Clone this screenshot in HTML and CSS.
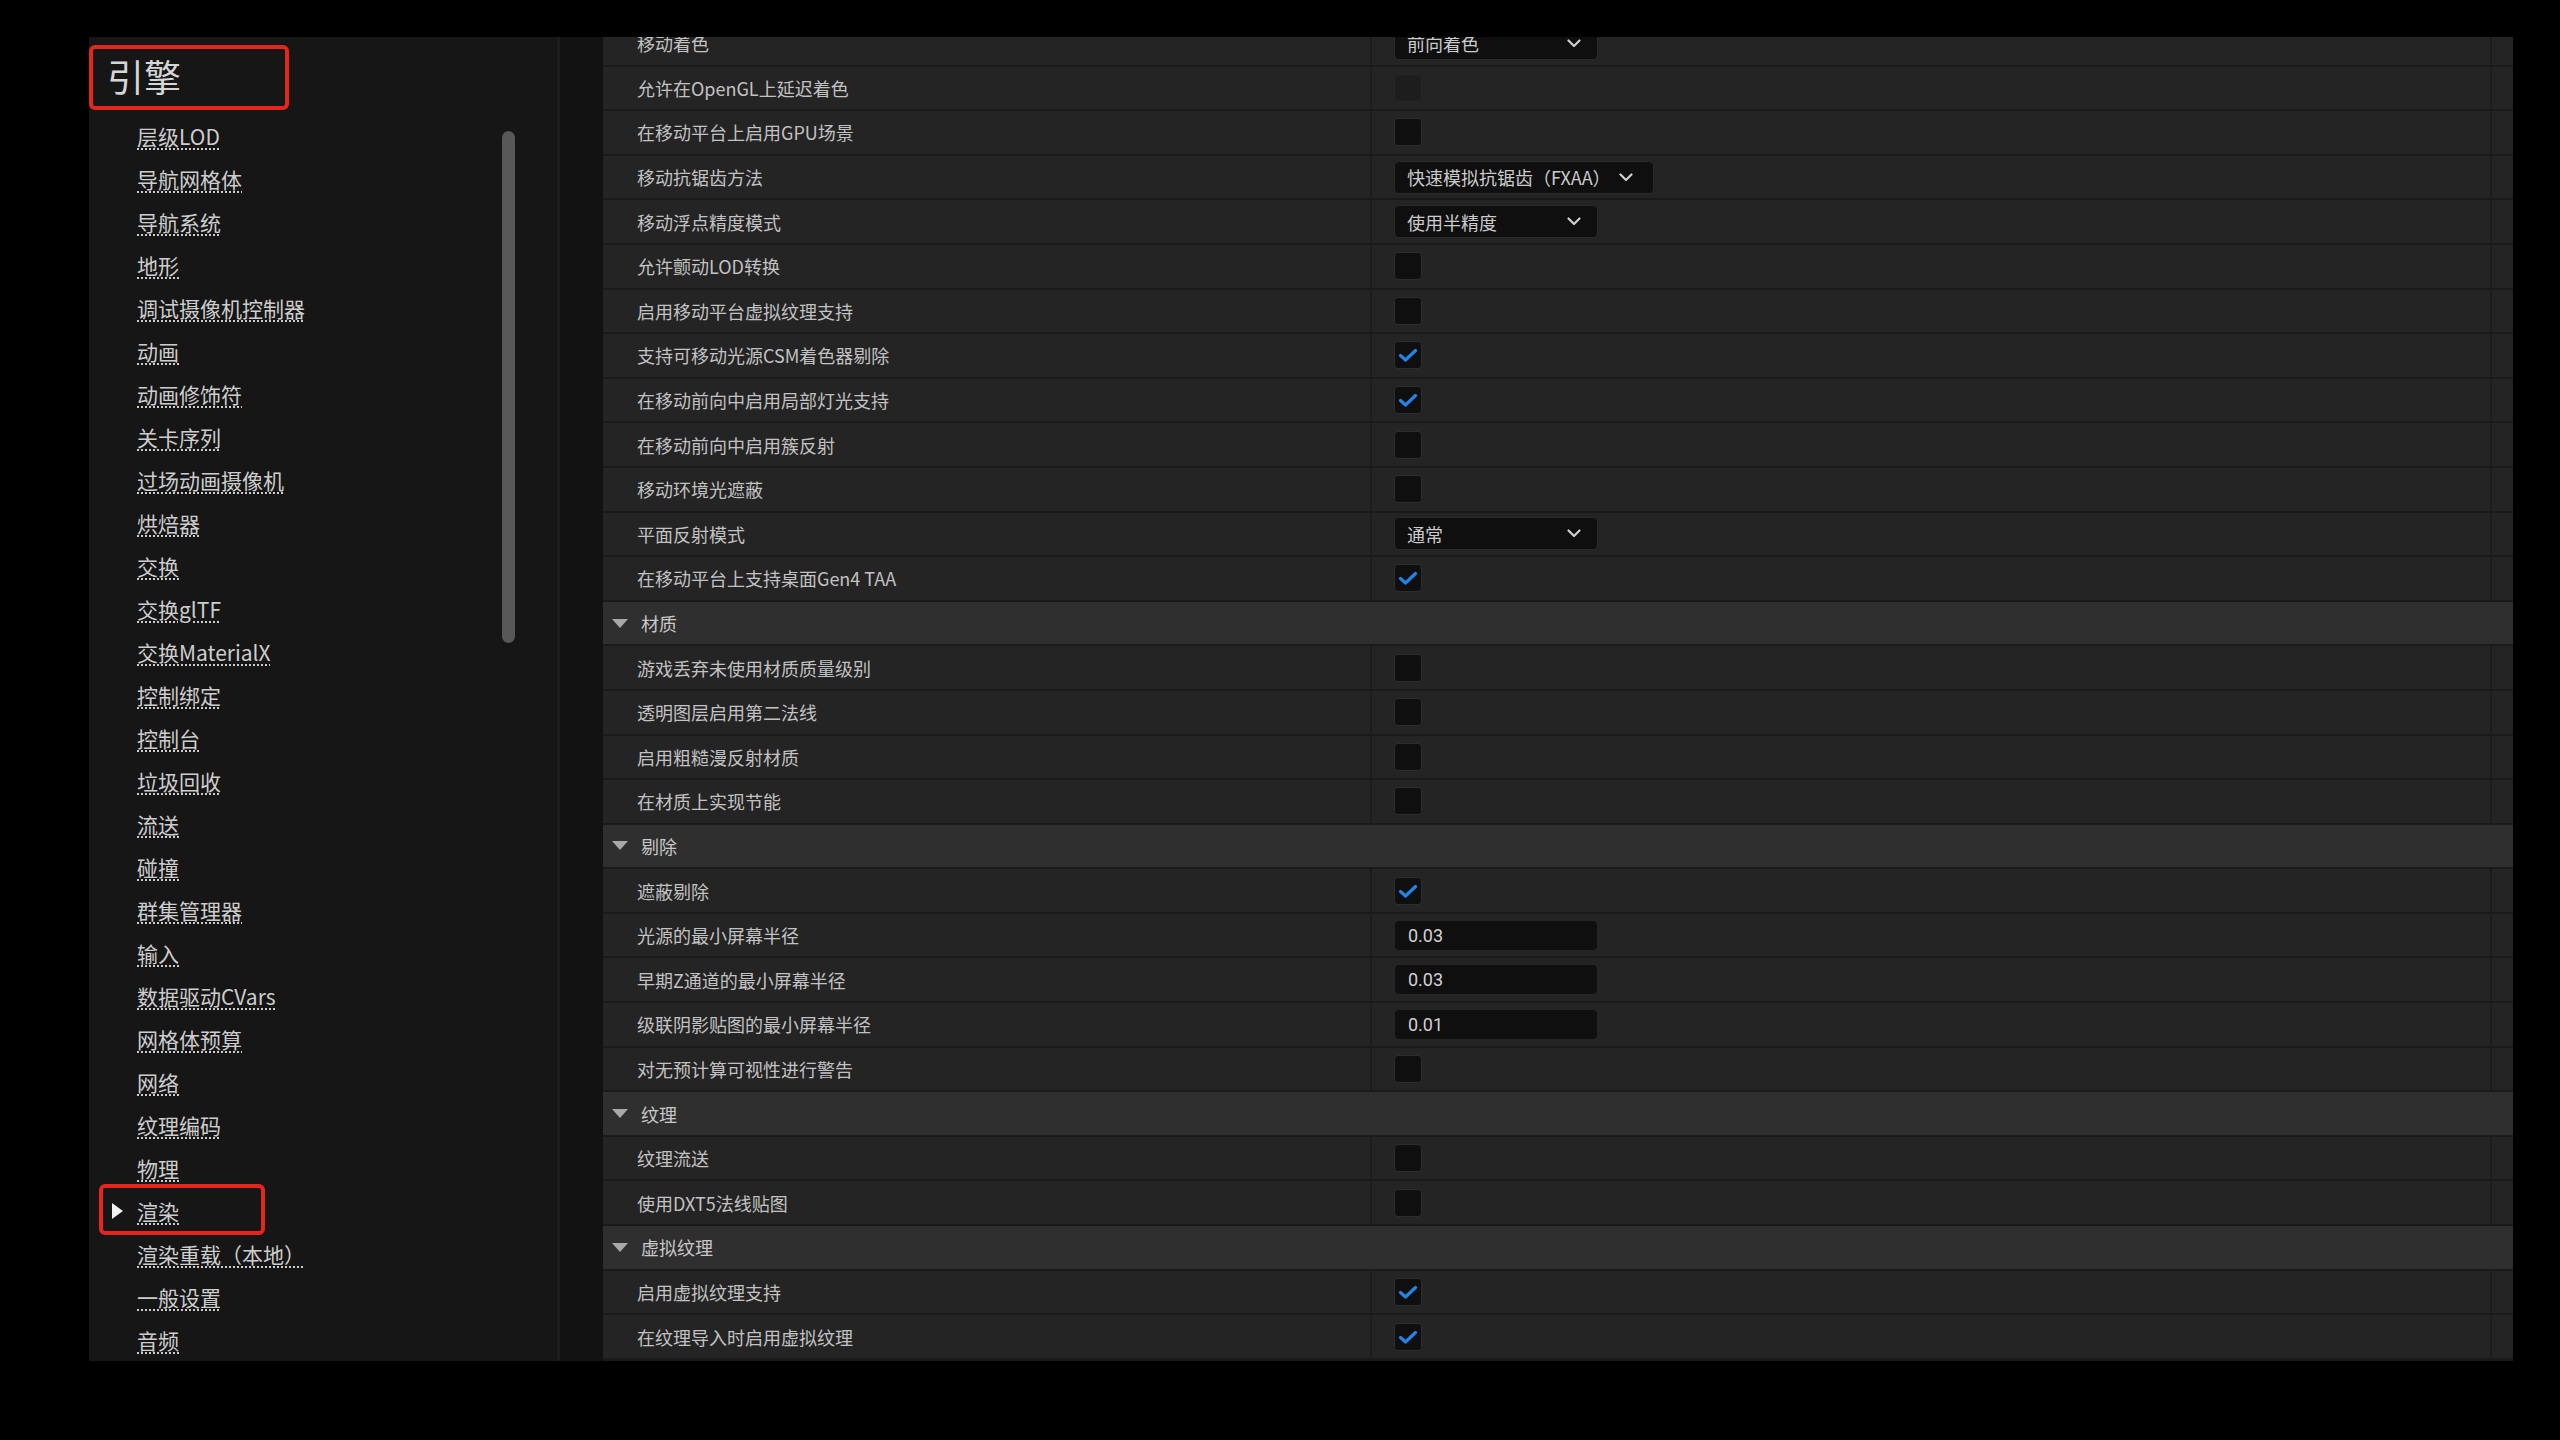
FILE: index.html
```html
<!DOCTYPE html>
<html lang="zh-CN">
<head>
    <meta charset="UTF-8">
    <title>项目设置 - 渲染</title>
    <link rel="stylesheet" href="styles.css">
</head>
<body>
    <div class="window">
        <aside class="sidebar">
            <div class="section-title">引擎</div>
            <ul class="nav">
                <li><span class="mark"></span><a>层级LOD</a></li>
                <li><span class="mark"></span><a>导航网格体</a></li>
                <li><span class="mark"></span><a>导航系统</a></li>
                <li><span class="mark"></span><a>地形</a></li>
                <li><span class="mark"></span><a>调试摄像机控制器</a></li>
                <li><span class="mark"></span><a>动画</a></li>
                <li><span class="mark"></span><a>动画修饰符</a></li>
                <li><span class="mark"></span><a>关卡序列</a></li>
                <li><span class="mark"></span><a>过场动画摄像机</a></li>
                <li><span class="mark"></span><a>烘焙器</a></li>
                <li><span class="mark"></span><a>交换</a></li>
                <li><span class="mark"></span><a>交换glTF</a></li>
                <li><span class="mark"></span><a>交换MaterialX</a></li>
                <li><span class="mark"></span><a>控制绑定</a></li>
                <li><span class="mark"></span><a>控制台</a></li>
                <li><span class="mark"></span><a>垃圾回收</a></li>
                <li><span class="mark"></span><a>流送</a></li>
                <li><span class="mark"></span><a>碰撞</a></li>
                <li><span class="mark"></span><a>群集管理器</a></li>
                <li><span class="mark"></span><a>输入</a></li>
                <li><span class="mark"></span><a>数据驱动CVars</a></li>
                <li><span class="mark"></span><a>网格体预算</a></li>
                <li><span class="mark"></span><a>网络</a></li>
                <li><span class="mark"></span><a>纹理编码</a></li>
                <li><span class="mark"></span><a>物理</a></li>
                <li class="active"><span class="mark"></span><a>渲染</a></li>
                <li><span class="mark"></span><a>渲染重载（本地）</a></li>
                <li><span class="mark"></span><a>一般设置</a></li>
                <li><span class="mark"></span><a>音频</a></li>
            </ul>
            <div class="scrollbar"></div>
        </aside>
        <div class="splitter"></div>
        <main class="details">
            <div class="rows">
                <div class="row"><div class="name">移动着色</div><div class="value"><div class="combo"><span>前向着色</span><svg viewBox="0 0 14 9"><path d="M1.5 1.5 L7 7 L12.5 1.5"/></svg></div></div><div class="tail"></div></div>
                <div class="row"><div class="name">允许在OpenGL上延迟着色</div><div class="value"><span class="check disabled"></span></div><div class="tail"></div></div>
                <div class="row"><div class="name">在移动平台上启用GPU场景</div><div class="value"><span class="check"></span></div><div class="tail"></div></div>
                <div class="row"><div class="name">移动抗锯齿方法</div><div class="value"><div class="combo auto"><span>快速模拟抗锯齿（FXAA）</span><svg viewBox="0 0 14 9"><path d="M1.5 1.5 L7 7 L12.5 1.5"/></svg></div></div><div class="tail"></div></div>
                <div class="row"><div class="name">移动浮点精度模式</div><div class="value"><div class="combo"><span>使用半精度</span><svg viewBox="0 0 14 9"><path d="M1.5 1.5 L7 7 L12.5 1.5"/></svg></div></div><div class="tail"></div></div>
                <div class="row"><div class="name">允许颤动LOD转换</div><div class="value"><span class="check"></span></div><div class="tail"></div></div>
                <div class="row"><div class="name">启用移动平台虚拟纹理支持</div><div class="value"><span class="check"></span></div><div class="tail"></div></div>
                <div class="row"><div class="name">支持可移动光源CSM着色器剔除</div><div class="value"><span class="check on"><svg viewBox="0 0 20 14"><path d="M2.5 7.5 L7.5 12 L17.5 2.5"/></svg></span></div><div class="tail"></div></div>
                <div class="row"><div class="name">在移动前向中启用局部灯光支持</div><div class="value"><span class="check on"><svg viewBox="0 0 20 14"><path d="M2.5 7.5 L7.5 12 L17.5 2.5"/></svg></span></div><div class="tail"></div></div>
                <div class="row"><div class="name">在移动前向中启用簇反射</div><div class="value"><span class="check"></span></div><div class="tail"></div></div>
                <div class="row"><div class="name">移动环境光遮蔽</div><div class="value"><span class="check"></span></div><div class="tail"></div></div>
                <div class="row"><div class="name">平面反射模式</div><div class="value"><div class="combo"><span>通常</span><svg viewBox="0 0 14 9"><path d="M1.5 1.5 L7 7 L12.5 1.5"/></svg></div></div><div class="tail"></div></div>
                <div class="row"><div class="name">在移动平台上支持桌面Gen4 TAA</div><div class="value"><span class="check on"><svg viewBox="0 0 20 14"><path d="M2.5 7.5 L7.5 12 L17.5 2.5"/></svg></span></div><div class="tail"></div></div>

                <div class="group"><span class="caret"></span>材质</div>
                <div class="row"><div class="name">游戏丢弃未使用材质质量级别</div><div class="value"><span class="check"></span></div><div class="tail"></div></div>
                <div class="row"><div class="name">透明图层启用第二法线</div><div class="value"><span class="check"></span></div><div class="tail"></div></div>
                <div class="row"><div class="name">启用粗糙漫反射材质</div><div class="value"><span class="check"></span></div><div class="tail"></div></div>
                <div class="row"><div class="name">在材质上实现节能</div><div class="value"><span class="check"></span></div><div class="tail"></div></div>

                <div class="group"><span class="caret"></span>剔除</div>
                <div class="row"><div class="name">遮蔽剔除</div><div class="value"><span class="check on"><svg viewBox="0 0 20 14"><path d="M2.5 7.5 L7.5 12 L17.5 2.5"/></svg></span></div><div class="tail"></div></div>
                <div class="row"><div class="name">光源的最小屏幕半径</div><div class="value"><div class="number">0.03</div></div><div class="tail"></div></div>
                <div class="row"><div class="name">早期Z通道的最小屏幕半径</div><div class="value"><div class="number">0.03</div></div><div class="tail"></div></div>
                <div class="row"><div class="name">级联阴影贴图的最小屏幕半径</div><div class="value"><div class="number">0.01</div></div><div class="tail"></div></div>
                <div class="row"><div class="name">对无预计算可视性进行警告</div><div class="value"><span class="check"></span></div><div class="tail"></div></div>

                <div class="group"><span class="caret"></span>纹理</div>
                <div class="row"><div class="name">纹理流送</div><div class="value"><span class="check"></span></div><div class="tail"></div></div>
                <div class="row"><div class="name">使用DXT5法线贴图</div><div class="value"><span class="check"></span></div><div class="tail"></div></div>

                <div class="group"><span class="caret"></span>虚拟纹理</div>
                <div class="row"><div class="name">启用虚拟纹理支持</div><div class="value"><span class="check on"><svg viewBox="0 0 20 14"><path d="M2.5 7.5 L7.5 12 L17.5 2.5"/></svg></span></div><div class="tail"></div></div>
                <div class="row"><div class="name">在纹理导入时启用虚拟纹理</div><div class="value"><span class="check on"><svg viewBox="0 0 20 14"><path d="M2.5 7.5 L7.5 12 L17.5 2.5"/></svg></span></div><div class="tail"></div></div>
            </div>
        </main>
    </div>
</body>
</html>
```

FILE: styles.css
```css
body {
    margin: 0;
    width: 2560px;
    height: 1440px;
    background-color: #000;
    font-family: "Noto Sans CJK SC", "Noto Sans", sans-serif;
    color: #c4c4c4;
    overflow: hidden;
}
.window {
    display: flex;
    margin: 37px 0 0 89px;
    width: 2424px;
    height: 1324px;
    overflow: hidden;
}

/* left category list */
.sidebar {
    position: relative;
    width: 468px;
    flex: none;
    background-color: #161616;
    border-right: 3px solid #1d1d1d;
}
.section-title {
    box-sizing: border-box;
    margin-top: 8px;
    width: 200px;
    height: 65px;
    padding-left: 14px;
    border: 4px solid #e5261d;
    border-radius: 6px;
    font-size: 37px;
    line-height: 55px;
    color: #d6d6d6;
}
.nav {
    list-style: none;
    margin: 4px 0 0;
    padding: 0;
}
.nav li {
    position: relative;
    display: flex;
    align-items: center;
    height: 43px;
}
.nav .mark {
    width: 48px;
    flex: none;
}
.nav a {
    font-size: 21px;
    color: #cdcdcd;
    text-decoration: underline dotted;
    text-decoration-thickness: 2px;
    text-underline-offset: 4px;
}
.nav li.active .mark::before {
    content: "";
    display: block;
    margin-left: 23px;
    width: 0;
    height: 0;
    border-top: 8px solid transparent;
    border-bottom: 8px solid transparent;
    border-left: 11px solid #f2f2f2;
}
.nav li.active::after {
    content: "";
    position: absolute;
    left: 10px;
    top: -5px;
    width: 166px;
    height: 51px;
    box-sizing: border-box;
    border: 4px solid #e5261d;
    border-radius: 6px;
}
.scrollbar {
    position: absolute;
    left: 413px;
    top: 94px;
    width: 13px;
    height: 512px;
    border-radius: 7px;
    background-color: #585858;
}

.splitter {
    width: 43px;
    flex: none;
    background-color: #121212;
}

/* property grid */
.details {
    flex: 1;
    overflow: hidden;
    background-color: #1a1a1a;
}
.rows {
    margin-top: -15px;
}
.row {
    display: grid;
    grid-template-columns: 769px 1fr 21px;
    height: 42.6px;
    border-bottom: 2px solid #1a1a1a;
    background-color: #242424;
}
.row .name {
    display: flex;
    align-items: center;
    padding-left: 34px;
    font-size: 18px;
    color: #c2c2c2;
    border-right: 2px solid #1c1c1c;
}
.row .value {
    display: flex;
    align-items: center;
    padding-left: 22px;
    border-right: 2px solid #1c1c1c;
}
.group {
    display: flex;
    align-items: center;
    height: 42.6px;
    border-bottom: 2px solid #1a1a1a;
    background-color: #2f2f2f;
    font-size: 18px;
    color: #c8c8c8;
}
.caret {
    width: 0;
    height: 0;
    margin: 0 13px 0 9px;
    border-left: 8px solid transparent;
    border-right: 8px solid transparent;
    border-top: 9px solid #a8a8a8;
}

.check {
    display: flex;
    align-items: center;
    justify-content: center;
    box-sizing: border-box;
    width: 28px;
    height: 28px;
    border: 1px solid #2d2d2d;
    border-radius: 4px;
    background-color: #0f0f0f;
}
.check.disabled {
    background-color: #1d1d1d;
    border-color: #262626;
}
.check svg {
    width: 20px;
    height: 14px;
    fill: none;
    stroke: #2384e6;
    stroke-width: 3.2;
    stroke-linecap: round;
    stroke-linejoin: round;
}
.combo {
    box-sizing: border-box;
    display: flex;
    align-items: center;
    justify-content: space-between;
    width: 204px;
    height: 33px;
    padding: 0 16px 0 12px;
    border: 1px solid #2a2a2a;
    border-radius: 5px;
    background-color: #0f0f0f;
    font-size: 18px;
    color: #cbcbcb;
}
.combo.auto {
    width: auto;
    gap: 8px;
    padding-right: 20px;
}
.combo svg {
    width: 14px;
    height: 9px;
    fill: none;
    stroke: #d0d0d0;
    stroke-width: 2.2;
    stroke-linecap: round;
    stroke-linejoin: round;
}
.number {
    box-sizing: border-box;
    display: flex;
    align-items: center;
    width: 204px;
    height: 31px;
    padding-left: 13px;
    border: 1px solid #262626;
    border-radius: 5px;
    background-color: #0f0f0f;
    font-family: Roboto, "Noto Sans", sans-serif;
    font-size: 18px;
    color: #d2d2d2;
}
```
